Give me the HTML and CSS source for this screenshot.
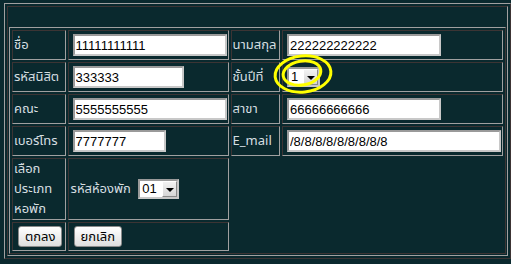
FILE: index.html
```html
<!DOCTYPE html>
<html lang="th">
<head>
    <meta charset="UTF-8">
    <meta name="viewport" content="width=device-width, initial-scale=1.0">
    <title>ลงทะเบียนหอพัก</title>
    <link rel="stylesheet" href="styles.css">
</head>
<body>
    <table class="frame">
        <tr>
            <td class="frame-cell">
                <table class="form">
                    <tr>
                        <td class="c1 label">ชื่อ</td>
                        <td class="c2"><input type="text" class="w154" value="11111111111"></td>
                        <td class="c3 label">นามสกุล</td>
                        <td class="c4"><input type="text" class="w154" value="222222222222"></td>
                    </tr>
                    <tr>
                        <td class="label">รหัสนิสิต</td>
                        <td><input type="text" class="w111" value="333333"></td>
                        <td class="label">ชั้นปีที่</td>
                        <td>
                            <span class="pick year"><span class="pick-val">1</span><span class="pick-btn"></span></span>
                        </td>
                    </tr>
                    <tr>
                        <td class="label">คณะ</td>
                        <td><input type="text" class="w154" value="5555555555"></td>
                        <td class="label">สาขา</td>
                        <td><input type="text" class="w154" value="66666666666"></td>
                    </tr>
                    <tr>
                        <td class="label">เบอร์โทร</td>
                        <td><input type="text" class="w93" value="7777777"></td>
                        <td class="label">E_mail</td>
                        <td><input type="text" class="w214" value="/8/8/8/8/8/8/8/8/8"></td>
                    </tr>
                    <tr>
                        <td class="label tall">เลือก ประเภท หอพัก</td>
                        <td class="label">
                            <span class="room">รหัสห้องพัก</span>
                            <span class="pick"><span class="pick-val">01</span><span class="pick-btn"></span></span>
                        </td>
                    </tr>
                    <tr>
                        <td><button class="btn">ตกลง</button></td>
                        <td><button class="btn">ยกเลิก</button></td>
                    </tr>
                </table>
            </td>
        </tr>
    </table>

    <!-- ปากกาไฮไลต์วงรอบช่องชั้นปี -->
    <svg class="mark" width="70" height="50" viewBox="0 0 70 50">
        <ellipse cx="33" cy="24" rx="28" ry="18" transform="rotate(-6 33 24)" fill="none" stroke="#ffff00" stroke-width="3"/>
        <ellipse cx="32" cy="23" rx="19" ry="12" transform="rotate(-10 32 23)" fill="none" stroke="#ffff00" stroke-width="3"/>
    </svg>
</body>
</html>
```

FILE: styles.css
```css
*{
    box-sizing: border-box;
}
body{
    margin: 0;
    background-color: #0a292e;
    font-family: Tahoma, "Noto Sans Thai", "DejaVu Sans", "Noto Sans", sans-serif;
    font-size: 13px;
    color: #d6dfe1;
}
.frame{
    margin: 3px 0 0 4px;
    border-collapse: separate;
    border-spacing: 2px;
    border: 1px solid;
    border-color: #a0a0a0 #3c3434 #3c3434 #a0a0a0;
}
.frame-cell{
    padding: 20px 1px 1px 1px;
    border: 1px solid;
    border-color: #3c3434 #a0a0a0 #a0a0a0 #3c3434;
}
.form{
    border-collapse: separate;
    border-spacing: 2px;
    table-layout: fixed;
    border: 1px solid;
    border-color: #a0a0a0 #3c3434 #3c3434 #a0a0a0;
}
.form td{
    padding: 0 1px;
    border: 1px solid;
    border-color: #3c3434 #a0a0a0 #a0a0a0 #3c3434;
    vertical-align: middle;
    line-height: 19px;
}
.c1{ width: 54px; }
.c2{ width: 161px; }
.c3{ width: 50px; }
.c4{ width: 221px; }
.label{
    white-space: normal;
}
.tall{
    line-height: 20px !important;
}
input{
    display: block;
    height: 22px;
    margin: 3px 0 3px 3px;
    padding: 0 1px;
    border: 2px solid;
    border-color: #9a9a9a #c8c8c8 #c8c8c8 #9a9a9a;
    background: #fff;
    color: #000;
    font-family: "Liberation Sans", Arial, sans-serif;
    font-size: 13px;
}
.w154{ width: 154px; }
.w111{ width: 111px; }
.w93{ width: 93px; }
.w214{ width: 214px; }
.room{
    margin-left: 1px;
    vertical-align: middle;
}
.pick{
    display: inline-flex;
    vertical-align: middle;
    margin-left: 4px;
    height: 20px;
    width: 41px;
    border: 2px solid;
    border-color: #9a9a9a #c8c8c8 #c8c8c8 #9a9a9a;
    background: #fff;
    color: #000;
    font-family: "Liberation Sans", Arial, sans-serif;
    font-size: 13px;
}
.pick.year{
    width: 33px;
    height: 20px;
    margin: 4px 0 4px 3px;
}
.pick-val{
    flex: 1;
    padding-left: 2px;
    line-height: 16px;
}
.pick-btn{
    width: 15px;
    margin: 0 0 0 0;
    background: linear-gradient(#f2f2f2, #d6d6d6);
    border: 1px solid;
    border-color: #ffffff #8a8a8a #8a8a8a #ffffff;
    position: relative;
}
.pick-btn::after{
    content: "";
    position: absolute;
    left: 3px;
    top: 6px;
    border-left: 4px solid transparent;
    border-right: 4px solid transparent;
    border-top: 4px solid #000;
}
.btn{
    display: block;
    height: 21px;
    margin: 3px 0 3px 4px;
    padding: 0 6px;
    border: 1px solid #8a8a8a;
    border-radius: 3px;
    background: linear-gradient(#ffffff, #dedede);
    color: #000;
    font-family: Tahoma, "Noto Sans Thai", "DejaVu Sans", sans-serif;
    font-size: 13px;
}
.mark{
    position: absolute;
    left: 270px;
    top: 50px;
}
```
